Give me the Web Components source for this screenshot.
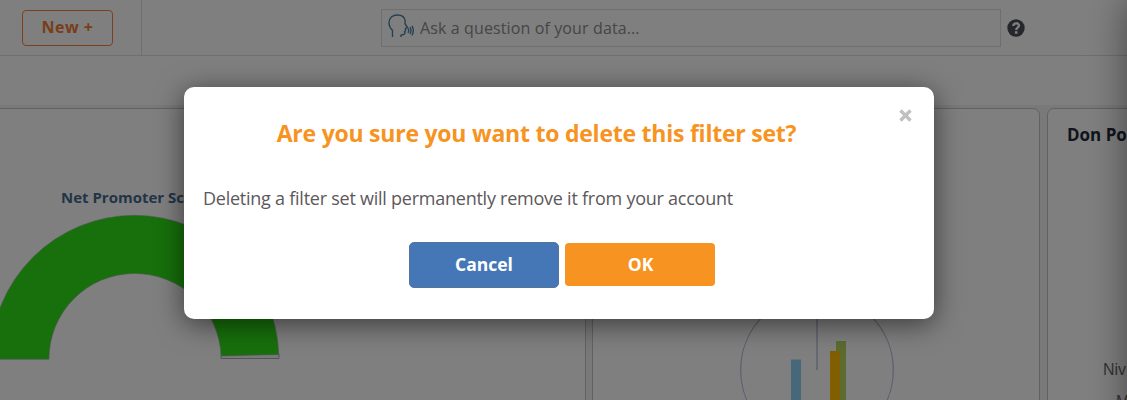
<!DOCTYPE html>
<html lang="en">
<head>
<meta charset="utf-8">
<title>Dashboard</title>
<style>
  body {
    margin: 0;
    height: 400px;
    overflow: hidden;
    position: relative;
    font-family: "Open Sans", "Noto Sans", sans-serif;
    background: #f2f2f2;
  }
</style>
</head>
<body>
<top-bar></top-bar>
<dash-board>
  <dash-card>
    <gauge-chart caption="Net Promoter Score"></gauge-chart>
  </dash-card>
  <dash-card>
    <radial-bars></radial-bars>
  </dash-card>
  <dash-card heading="Don Po">
    <axis-labels></axis-labels>
  </dash-card>
</dash-board>
<side-drawer></side-drawer>
<confirm-dialog>
  <span slot="title">Are you sure you want to delete this filter set?</span>
  Deleting a filter set will permanently remove it from your account
  <dialog-button slot="actions" kind="cancel">Cancel</dialog-button>
  <dialog-button slot="actions" kind="ok">OK</dialog-button>
</confirm-dialog>

<script>
class TopBar extends HTMLElement {
  constructor() {
    super();
    this.attachShadow({ mode: 'open' }).innerHTML = `
    <style>
      * { box-sizing: border-box; }
      :host { display: block; background: #fff; }
      header {
        display: grid;
        grid-template-columns: 142px 239px 620px auto;
        height: 56px;
        border-bottom: 1px solid #dedede;
      }
      .new {
        border-right: 1px solid #dedede;
        padding: 10px 0 0 22px;
      }
      button {
        display: block;
        width: 91px;
        height: 36px;
        padding: 0 0 2px;
        border: 1px solid #f58238;
        border-radius: 4px;
        background: none;
        color: #f07c38;
        font: 700 16px "Open Sans", sans-serif;
        letter-spacing: 0.5px;
      }
      .search {
        grid-column: 3;
        display: flex;
        margin-top: 9px;
        height: 38px;
        padding: 0 0 0 6px;
        border: 1px solid #dedede;
        color: #8c8c8c;
        font-size: 16px;
        line-height: 36px;
        letter-spacing: 0.12px;
      }
      .search svg { flex: none; margin: 4px 5px 0 0; }
      .help { margin: 19px 0 0 6px; }
    </style>
    <header>
      <div class="new"><button>New +</button></div>
      <div class="search">
        <svg width="27" height="24" viewBox="0 0 27 24" fill="none" stroke="#4c83a6" stroke-width="1.4">
          <path d="M4.500 23V16.500C2 14 1 11.500 1 8.800C1 4 4.600 1 9.300 1C14 1 17 3.500 17.200 7.500L17 9.700L19.500 13.500L17.500 14.500V16.800L16.500 17.700L17 19C17 21 14 20.500 13 21.200V23"/>
          <path d="M20 14.500Q21.500 16.500 20 18.800M22 13Q24 16.500 22 20M24 11.800Q26.700 16.500 24 21.500"/>
        </svg>
        <span>Ask a question of your data...</span>
      </div>
      <div class="help">
        <svg width="19" height="19" viewBox="0 0 19 19">
          <circle cx="9" cy="9" r="8.700" fill="#4b4f56"/>
          <path d="M6.200 7C6.600 3.300 12 3.600 12 6.500C12 8.700 9.200 8.500 9.200 10.900" fill="none" stroke="#fff" stroke-width="2.300"/>
          <rect x="7.900" y="12.200" width="2.600" height="2.500" fill="#fff"/>
        </svg>
      </div>
    </header>`;
  }
}

class DashBoard extends HTMLElement {
  constructor() {
    super();
    this.attachShadow({ mode: 'open' }).innerHTML = `
    <style>
      :host { display: block; height: 344px; overflow: hidden; }
      .filters { height: 49px; background: #fff; }
      .cards {
        display: grid;
        grid-template-columns: 597px 448px 90px;
        column-gap: 6px;
        margin: 3px 0 0 -11px;
        height: 310px;
      }
      ::slotted(:nth-child(3)) { margin-left: 1px; }
    </style>
    <div class="filters"></div>
    <div class="cards"><slot></slot></div>`;
  }
}

class DashCard extends HTMLElement {
  constructor() {
    super();
    const heading = this.getAttribute('heading') || '';
    this.attachShadow({ mode: 'open' }).innerHTML = `
    <style>
      :host {
        box-sizing: border-box;
        display: flex;
        flex-direction: column;
        border: 1px solid #c4c4c4;
        border-radius: 7px;
        background: #fff;
        overflow: hidden;
      }
      h3 {
        flex: none;
        margin: 0;
        height: 50px;
        padding-left: 19px;
        font-size: 17px;
        font-weight: 700;
        line-height: 51px;
        letter-spacing: 0;
        white-space: nowrap;
        color: #1f2a3a;
      }
    </style>
    <h3>${heading}</h3>
    <slot></slot>`;
  }
}

class GaugeChart extends HTMLElement {
  constructor() {
    super();
    this.attachShadow({ mode: 'open' }).innerHTML = `
    <style>
      :host { display: block; width: 289px; padding: 27px 0 0 0; }
      .caption {
        height: 22px;
        padding-left: 1px;
        color: #46698f;
        font-size: 15px;
        font-weight: 700;
        line-height: 22px;
        text-align: center;
      }
      svg { display: block; margin-top: 6px; }
    </style>
    <div class="caption">${this.getAttribute('caption')}</div>
    <svg width="292" height="150" viewBox="-144.500 -145 292 150" stroke="#a4acb4" stroke-width="1">
      <path d="M86.500 -3.500L144.500 -5V-.5H86.500Z" fill="#f2f2f2"/>
      <path d="M-144 .3A144 144 0 0 1 0 -143.700A144.300 144 0 0 1 144.300 -4.500L86.500 -3A86.500 85.200 0 0 0 0 -85.500A85.500 85.500 0 0 0 -85.500 .3Z" fill="#2ee016" stroke-width=".6"/>
    </svg>`;
  }
}

class RadialBars extends HTMLElement {
  constructor() {
    super();
    this.attachShadow({ mode: 'open' }).innerHTML = `
    <style>
      :host { display: block; padding: 110px 0 0 144px; }
      svg { display: block; }
    </style>
    <svg width="160" height="160" viewBox="737 269 160 160">
      <circle cx="817" cy="370" r="76.300" fill="none" stroke="#b8c0dc" stroke-width="1.200"/>
      <path d="M817 293V370" stroke="#c3c9e0" stroke-width="1.700"/>
      <path d="M791 359.500H801V429H791Z" fill="#8cd0f2"/>
      <path d="M836 341H846V429H836Z" fill="#b8d95c"/>
      <path d="M830 351H840V429H830Z" fill="#ffbf00"/>
    </svg>`;
  }
}

class AxisLabels extends HTMLElement {
  constructor() {
    super();
    this.attachShadow({ mode: 'open' }).innerHTML = `
    <style>
      :host {
        display: block;
        padding: 197px 0 0 55px;
        color: #6b6b6b;
        font: 16px/28px "Liberation Sans", sans-serif;
      }
      div + div { padding: 4px 0 0 13px; }
    </style>
    <div>Niv</div>
    <div>M</div>`;
  }
}

class SideDrawer extends HTMLElement {
  constructor() {
    super();
    // parked just past the right edge, only its shadow shows
    this.attachShadow({ mode: 'open' }).innerHTML = `
    <style>
      :host {
        position: absolute;
        top: 0;
        left: 100%;
        width: 200px;
        height: 500px;
        box-shadow: 0 0 36px rgba(0, 0, 0, 0.45);
      }
    </style>`;
  }
}

class DialogButton extends HTMLElement {
  constructor() {
    super();
    this.attachShadow({ mode: 'open' }).innerHTML = `
    <style>
      button {
        display: block;
        box-sizing: border-box;
        width: 150px;
        height: 43px;
        margin-top: 1px;
        padding: 0 0 1px 1px;
        border: 0;
        border-radius: 4px;
        background: #f79321;
        color: #fff;
        font: 700 17.500px "Open Sans", sans-serif;
      }
      :host([kind="cancel"]) button {
        height: 46px;
        margin-top: 0;
        padding: 0 0 2px;
        border: 1px solid #54749c;
        border-radius: 5px;
        background: #4577b6;
      }
    </style>
    <button><slot></slot></button>`;
  }
}

class ConfirmDialog extends HTMLElement {
  constructor() {
    super();
    this.attachShadow({ mode: 'open' }).innerHTML = `
    <style>
      * { box-sizing: border-box; }
      :host {
        position: absolute;
        inset: 0;
        display: block;
        background: rgba(0, 0, 0, 0.5);
      }
      .panel {
        width: 750px;
        height: 232px;
        margin: 87px 0 0 184px;
        padding: 19px 18px 0 19px;
        border-radius: 10px;
        background: #fff;
        box-shadow: 0 5px 28px rgba(0, 0, 0, 0.55);
      }
      .head { display: flex; }
      h2 {
        flex: 1;
        margin: 10px 0 0;
        padding-right: 26px;
        color: #f79321;
        font-size: 23px;
        font-weight: 700;
        line-height: 34px;
        letter-spacing: -0.235px;
        text-align: center;
        white-space: nowrap;
      }
      .close { width: 20px; height: 20px; margin: 0; }
      .close svg { display: block; }
      p {
        margin: 34px 0 0;
        height: 28px;
        color: #5c585b;
        font-size: 18px;
        line-height: 28px;
        font-weight: 400;
        letter-spacing: -0.245px;
        white-space: nowrap;
      }
      .actions {
        display: flex;
        align-items: flex-start;
        gap: 6px;
        margin: 30px 0 0 206px;
      }
    </style>
    <div class="panel">
      <div class="head">
        <h2><slot name="title"></slot></h2>
        <div class="close">
          <svg width="20" height="20" viewBox="0 0 20 20">
            <path d="M4.500 4.500L14.500 14.500M14.500 4.500L4.500 14.500" stroke="#c0c0c0" stroke-width="3.400"/>
          </svg>
        </div>
      </div>
      <p><slot></slot></p>
      <div class="actions"><slot name="actions"></slot></div>
    </div>`;
  }
}

customElements.define('top-bar', TopBar);
customElements.define('dash-board', DashBoard);
customElements.define('dash-card', DashCard);
customElements.define('gauge-chart', GaugeChart);
customElements.define('radial-bars', RadialBars);
customElements.define('axis-labels', AxisLabels);
customElements.define('side-drawer', SideDrawer);
customElements.define('dialog-button', DialogButton);
customElements.define('confirm-dialog', ConfirmDialog);
</script>
</body>
</html>
